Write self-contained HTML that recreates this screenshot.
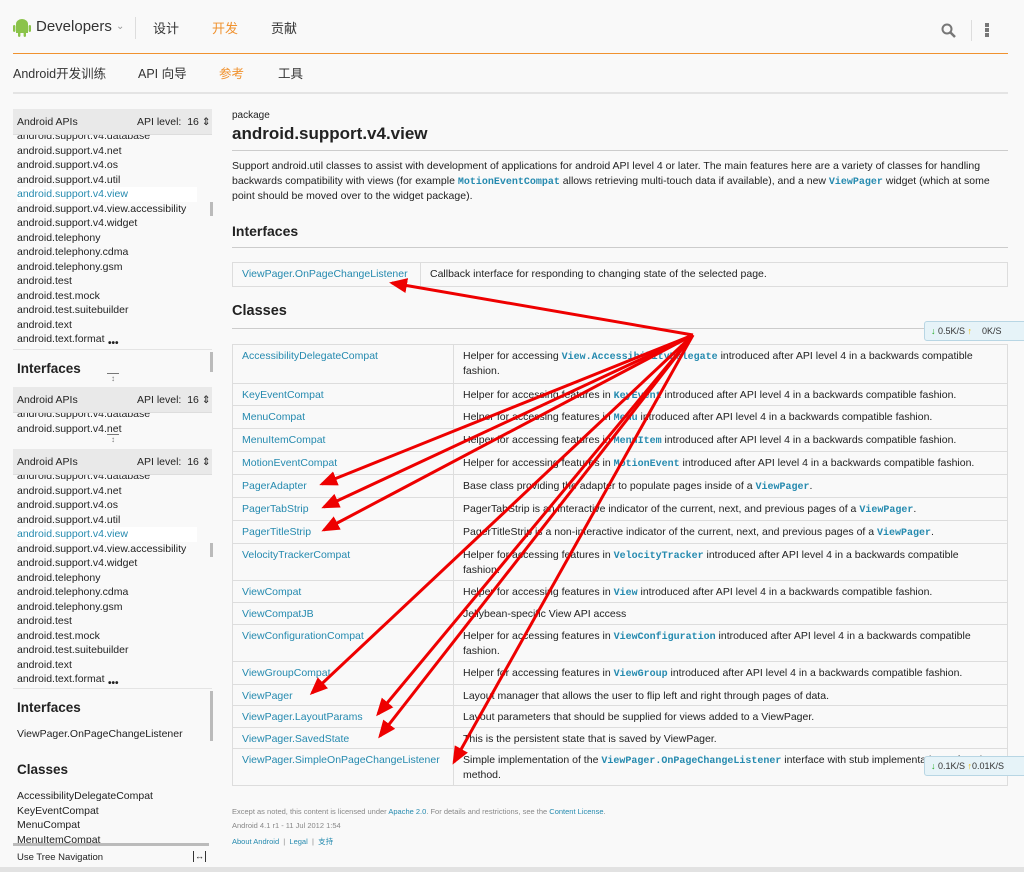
<!DOCTYPE html>
<html><head><meta charset="utf-8"><style>
*{margin:0;padding:0;box-sizing:border-box}
body{width:1024px;height:872px;background:#f9f9f9;font-family:"Liberation Sans","Noto Sans CJK SC",sans-serif;color:#222;position:relative;overflow:hidden}
.a{position:absolute;white-space:nowrap}
.side{font-size:10.5px;color:#222;line-height:14.5px}
.hd{position:absolute;left:13px;width:199px;height:26px;background:#e9e9e9;font-size:10.5px;border-bottom:1px solid #ddd}
.lnk{color:#258aaf}
code{font-family:"Liberation Mono",monospace;color:#258aaf;font-size:10px;font-weight:bold;line-height:10px}
table{border-collapse:collapse;position:absolute;font-size:10.5px;line-height:15px;table-layout:fixed}
td{border:1px solid #ddd;padding:4px 9px 0;vertical-align:top;background:#f9f9f9;overflow:hidden}
td:first-child{color:#258aaf}
.nt{position:absolute;height:20px;background:#e6f3f8;border:1px solid #b8d6e4;border-radius:3px;font-size:9px;line-height:18px;padding-left:6px;color:#333}
</style></head><body>
<svg class="a" style="left:13px;top:18px" width="18" height="20" viewBox="0 0 18 20"><rect x="3" y="6" width="12" height="9" fill="#8bc34a"/><path d="M3 6a6 5 0 0 1 12 0z" fill="#8bc34a"/><rect x="0" y="7" width="2.4" height="7" rx="1.2" fill="#8bc34a"/><rect x="15.6" y="7" width="2.4" height="7" rx="1.2" fill="#8bc34a"/><rect x="5" y="14" width="2.4" height="5" rx="1.2" fill="#8bc34a"/><rect x="10.6" y="14" width="2.4" height="5" rx="1.2" fill="#8bc34a"/></svg>
<div class="a" style="left:36px;top:18px;font-size:15px;color:#333">Developers</div>
<div class="a" style="left:116px;top:21px;font-size:10px;color:#999">⌄</div>
<div class="a" style="left:135px;top:17px;width:1px;height:22px;background:#ddd"></div>
<div class="a" style="left:153px;top:18px;font-size:13px;color:#333">设计</div>
<div class="a" style="left:212px;top:18px;font-size:13px;color:#f0922f">开发</div>
<div class="a" style="left:271px;top:18px;font-size:13px;color:#333">贡献</div>
<svg class="a" style="left:940px;top:22px" width="18" height="18" viewBox="0 0 18 18"><circle cx="7" cy="7" r="4.5" fill="none" stroke="#777" stroke-width="2"/><path d="M10 10l5 5" stroke="#777" stroke-width="2.5"/></svg>
<div class="a" style="left:971px;top:20px;width:1px;height:21px;background:#ddd"></div>
<div class="a" style="left:985px;top:23px;width:4px;height:4px;background:#777"></div>
<div class="a" style="left:985px;top:28px;width:4px;height:4px;background:#777"></div>
<div class="a" style="left:985px;top:33px;width:4px;height:4px;background:#777"></div>
<div class="a" style="left:13px;top:53px;width:995px;height:1px;background:#f0922f"></div>
<div class="a" style="left:13px;top:63px;font-size:12.5px;color:#333">Android开发训练</div>
<div class="a" style="left:138px;top:63px;font-size:12.5px;color:#333">API 向导</div>
<div class="a" style="left:219px;top:63px;font-size:12.5px;color:#f0922f">参考</div>
<div class="a" style="left:278px;top:63px;font-size:12.5px;color:#333">工具</div>
<div class="a" style="left:13px;top:92px;width:995px;height:2px;background:#e4e4e4"></div>

<div class="hd" style="top:109px"><span class="a" style="left:4px;top:7px">Android APIs</span><span class="a" style="left:124px;top:7px">API level:&nbsp; 16 ⇕</span></div>
<div class="a side" style="left:17px;top:135px;height:207px;overflow:hidden;width:190px">
<div style="margin-top:-6px">android.support.v4.database<br>android.support.v4.net<br>android.support.v4.os<br>android.support.v4.util<br><span class="lnk" style="background:#fff;display:inline-block;width:180px">android.support.v4.view</span><br>android.support.v4.view.accessibility<br>android.support.v4.widget<br>android.telephony<br>android.telephony.cdma<br>android.telephony.gsm<br>android.test<br>android.test.mock<br>android.test.suitebuilder<br>android.text<br>android.text.format</div></div>
<div class="a" style="left:108px;top:338px;font-size:10px;font-weight:bold">•••</div>
<div class="a" style="left:210px;top:202px;width:3px;height:14px;background:#bbb"></div>
<div class="a" style="left:13px;top:349px;width:199px;height:1px;background:#e4e4e4"></div>
<div class="a" style="left:17px;top:361px;font-size:13.5px;font-weight:bold;height:13px;overflow:hidden">Interfaces</div>
<div class="a" style="left:210px;top:352px;width:3px;height:20px;background:#bbb"></div>
<div class="a" style="left:107px;top:373px;font-size:8px;color:#777;border-top:1px solid #777;width:12px;text-align:center">↕</div>
<div class="hd" style="top:387px"><span class="a" style="left:4px;top:7px">Android APIs</span><span class="a" style="left:124px;top:7px">API level:&nbsp; 16 ⇕</span></div>
<div class="a side" style="left:17px;top:413px;height:28px;overflow:hidden"><div style="margin-top:-6px">android.support.v4.database<br>android.support.v4.net</div></div>
<div class="a" style="left:107px;top:434px;font-size:8px;color:#777;border-top:1px solid #777;width:12px;text-align:center">↕</div>
<div class="hd" style="top:449px"><span class="a" style="left:4px;top:7px">Android APIs</span><span class="a" style="left:124px;top:7px">API level:&nbsp; 16 ⇕</span></div>
<div class="a side" style="left:17px;top:475px;height:207px;overflow:hidden;width:190px">
<div style="margin-top:-6px">android.support.v4.database<br>android.support.v4.net<br>android.support.v4.os<br>android.support.v4.util<br><span class="lnk" style="background:#fff;display:inline-block;width:180px">android.support.v4.view</span><br>android.support.v4.view.accessibility<br>android.support.v4.widget<br>android.telephony<br>android.telephony.cdma<br>android.telephony.gsm<br>android.test<br>android.test.mock<br>android.test.suitebuilder<br>android.text<br>android.text.format</div></div>
<div class="a" style="left:108px;top:678px;font-size:10px;font-weight:bold">•••</div>
<div class="a" style="left:210px;top:543px;width:3px;height:14px;background:#bbb"></div>
<div class="a" style="left:13px;top:688px;width:199px;height:1px;background:#e4e4e4"></div>
<div class="a" style="left:210px;top:691px;width:3px;height:50px;background:#bbb"></div>
<div class="a" style="left:17px;top:700px;font-size:13.5px;font-weight:bold">Interfaces</div>
<div class="a side" style="left:17px;top:727px">ViewPager.OnPageChangeListener</div>
<div class="a" style="left:17px;top:762px;font-size:13.5px;font-weight:bold">Classes</div>
<div class="a side" style="left:17px;top:789px;height:56px;overflow:hidden">AccessibilityDelegateCompat<br>KeyEventCompat<br>MenuCompat<br>MenuItemCompat</div>
<div class="a" style="left:13px;top:843px;width:196px;height:3px;background:#bbb"></div>
<div class="a" style="left:17px;top:852px;font-size:9.5px">Use Tree Navigation</div>
<div class="a" style="left:193px;top:851px;font-size:9px;border-left:1px solid #333;border-right:1px solid #333;padding:0 1px;line-height:11px">↔</div>

<div class="a" style="left:232px;top:110px;font-size:10px">package</div>
<div class="a" style="left:232px;top:124px;font-size:17px;font-weight:bold">android.support.v4.view</div>
<div class="a" style="left:232px;top:150px;width:776px;height:1px;background:#ccc"></div>
<div class="a" style="left:232px;top:159px;font-size:10.5px;line-height:15px;width:776px;white-space:normal">Support android.util classes to assist with development of applications for android API level 4 or later. The main features here are a variety of classes for handling backwards compatibility with views (for example <code>MotionEventCompat</code> allows retrieving multi-touch data if available), and a new <code>ViewPager</code> widget (which at some point should be moved over to the widget package).</div>
<div class="a" style="left:232px;top:223px;font-size:14px;font-weight:bold">Interfaces</div>
<div class="a" style="left:232px;top:247px;width:776px;height:1px;background:#ccc"></div>
<table style="left:232px;top:262px;width:776px"><tr style="height:24px"><td style="width:188px">ViewPager.OnPageChangeListener</td><td>Callback interface for responding to changing state of the selected page.</td></tr></table>
<div class="a" style="left:232px;top:303px;font-size:14.5px;font-weight:bold">Classes</div>
<div class="a" style="left:232px;top:328px;width:776px;height:1px;background:#ccc"></div>
<table style="left:232px;top:344px;width:776px">
<colgroup><col style="width:221px"><col></colgroup>
<tr style="height:39px"><td>AccessibilityDelegateCompat</td><td>Helper for accessing <code>View.AccessibilityDelegate</code> introduced after API level 4 in a backwards compatible fashion.</td></tr>
<tr style="height:22px"><td>KeyEventCompat</td><td>Helper for accessing features in <code>KeyEvent</code> introduced after API level 4 in a backwards compatible fashion.</td></tr>
<tr style="height:23px"><td>MenuCompat</td><td>Helper for accessing features in <code>Menu</code> introduced after API level 4 in a backwards compatible fashion.</td></tr>
<tr style="height:23px"><td>MenuItemCompat</td><td>Helper for accessing features in <code>MenuItem</code> introduced after API level 4 in a backwards compatible fashion.</td></tr>
<tr style="height:23px"><td>MotionEventCompat</td><td>Helper for accessing features in <code>MotionEvent</code> introduced after API level 4 in a backwards compatible fashion.</td></tr>
<tr style="height:23px"><td>PagerAdapter</td><td>Base class providing the adapter to populate pages inside of a <code>ViewPager</code>.</td></tr>
<tr style="height:23px"><td>PagerTabStrip</td><td>PagerTabStrip is an interactive indicator of the current, next, and previous pages of a <code>ViewPager</code>.</td></tr>
<tr style="height:23px"><td>PagerTitleStrip</td><td>PagerTitleStrip is a non-interactive indicator of the current, next, and previous pages of a <code>ViewPager</code>.</td></tr>
<tr style="height:37px"><td>VelocityTrackerCompat</td><td>Helper for accessing features in <code>VelocityTracker</code> introduced after API level 4 in a backwards compatible fashion.</td></tr>
<tr style="height:22px"><td>ViewCompat</td><td>Helper for accessing features in <code>View</code> introduced after API level 4 in a backwards compatible fashion.</td></tr>
<tr style="height:22px"><td>ViewCompatJB</td><td>Jellybean-specific View API access</td></tr>
<tr style="height:37px"><td>ViewConfigurationCompat</td><td>Helper for accessing features in <code>ViewConfiguration</code> introduced after API level 4 in a backwards compatible fashion.</td></tr>
<tr style="height:23px"><td>ViewGroupCompat</td><td>Helper for accessing features in <code>ViewGroup</code> introduced after API level 4 in a backwards compatible fashion.</td></tr>
<tr style="height:21px"><td>ViewPager</td><td>Layout manager that allows the user to flip left and right through pages of data.</td></tr>
<tr style="height:22px"><td>ViewPager.LayoutParams</td><td>Layout parameters that should be supplied for views added to a ViewPager.</td></tr>
<tr style="height:21px"><td>ViewPager.SavedState</td><td>This is the persistent state that is saved by ViewPager.</td></tr>
<tr style="height:37px"><td>ViewPager.SimpleOnPageChangeListener</td><td>Simple implementation of the <code>ViewPager.OnPageChangeListener</code> interface with stub implementations of each method.</td></tr>
</table>
<div class="a" style="left:232px;top:807px;font-size:7.5px;color:#888">Except as noted, this content is licensed under <span class="lnk">Apache 2.0</span>. For details and restrictions, see the <span class="lnk">Content License</span>.</div>
<div class="a" style="left:232px;top:821px;font-size:7.5px;color:#888">Android 4.1 r1 - 11 Jul 2012 1:54</div>
<div class="a" style="left:232px;top:836px;font-size:7.5px;color:#888"><span class="lnk">About Android</span> &nbsp;|&nbsp; <span class="lnk">Legal</span> &nbsp;|&nbsp; <span class="lnk">支持</span></div>
<div class="a" style="left:0;top:867px;width:1024px;height:5px;background:#e2e2e2"></div>

<div class="nt" style="left:924px;top:321px;width:110px"><span style="color:#2a2">↓</span> 0.5K/S <span style="color:#eb0">↑</span> &nbsp;&nbsp;&nbsp;0K/S</div>
<div class="nt" style="left:924px;top:756px;width:110px"><span style="color:#2a2">↓</span> 0.1K/S <span style="color:#eb0">↑</span>0.01K/S</div>

<svg class="a" style="left:0;top:0" width="1024" height="872">
<defs><marker id="m" markerWidth="6" markerHeight="5" refX="5" refY="2.5" orient="auto"><path d="M0 0L6 2.5L0 5z" fill="#e00"/></marker></defs>
<g stroke="#e00" stroke-width="3" fill="none" marker-end="url(#m)">
<path d="M693 335L392 283"/>
<path d="M693 335L322 484"/>
<path d="M693 335L324 507"/>
<path d="M693 335L324 530"/>
<path d="M693 335L312 693"/>
<path d="M693 335L378 714"/>
<path d="M693 335L380 736"/>
<path d="M693 335L454 762"/>
</g></svg>
</body></html>
